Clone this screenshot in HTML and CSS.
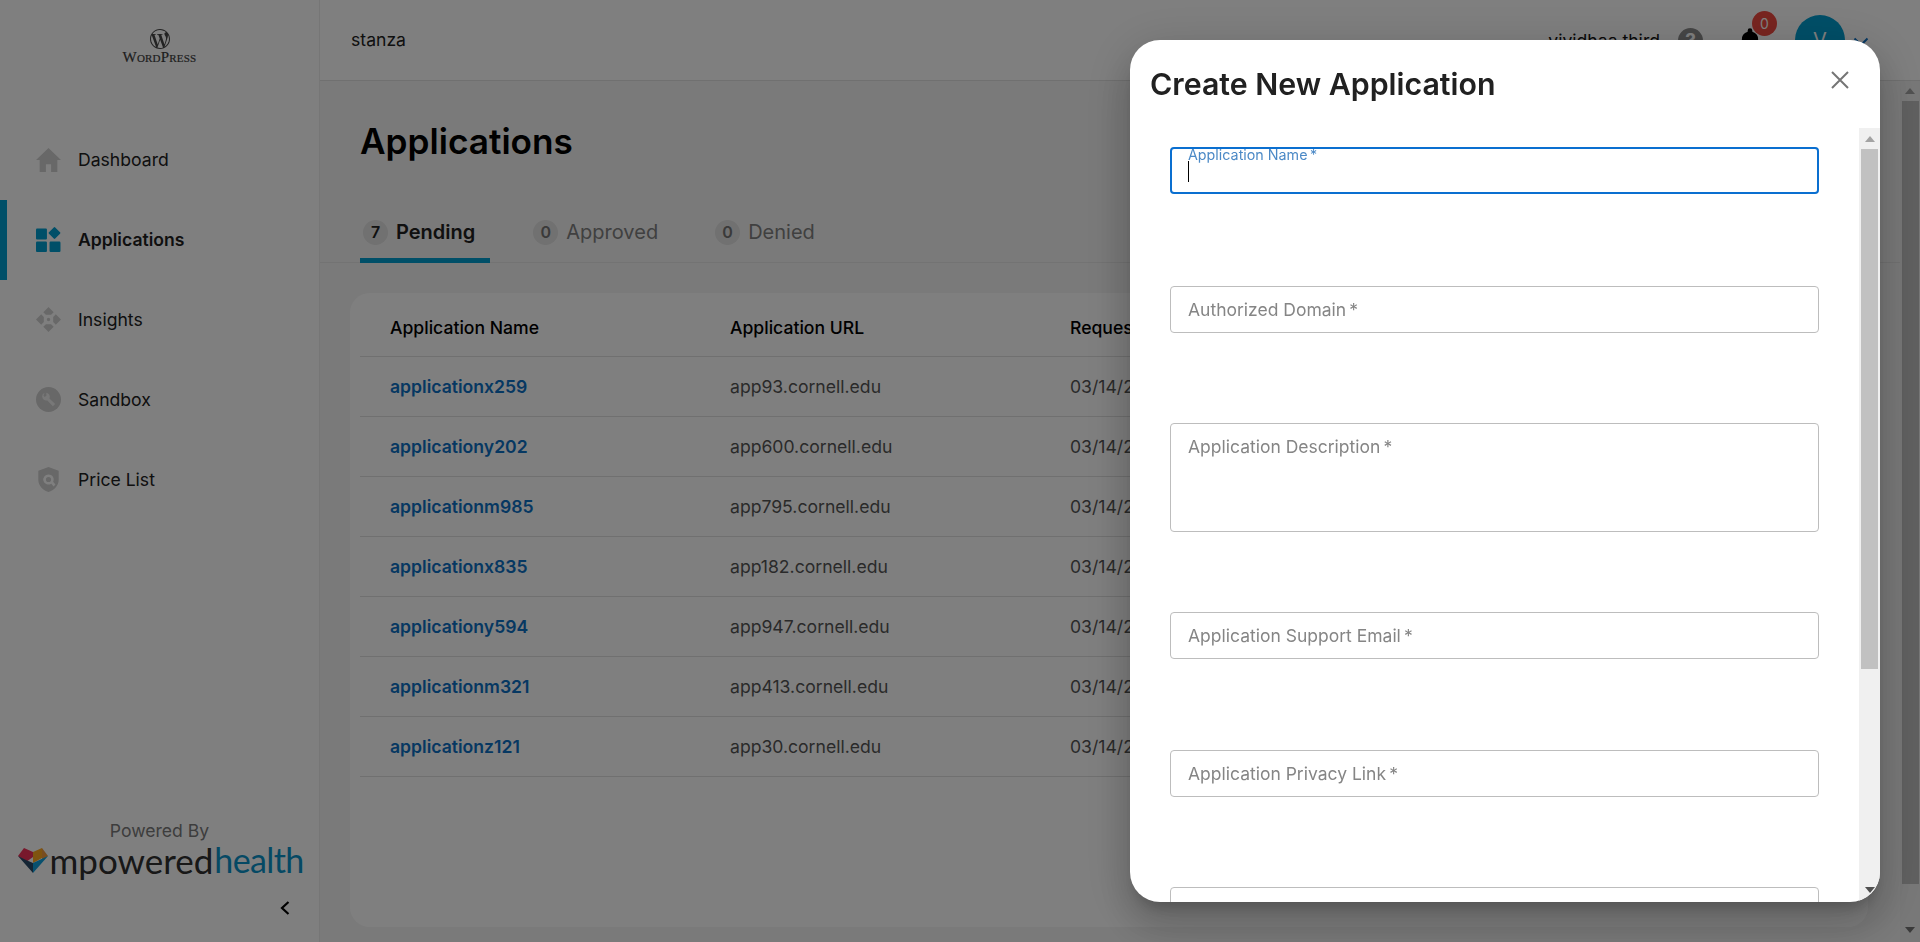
FILE: index.html
```html
<!DOCTYPE html>
<html lang="en">
<head>
<meta charset="utf-8">
<title>Applications</title>
<link rel="stylesheet" href="styles.css">
</head>
<body>
<div class="app">
  <aside class="sidebar">
    <div class="brand">
      <svg class="wp-mark" viewBox="0 0 24 24" width="20" height="20"><path fill="#464646" d="M21.469 6.825c.84 1.537 1.318 3.3 1.318 5.175 0 3.979-2.156 7.456-5.363 9.325l3.295-9.527c.615-1.54.82-2.771.82-3.864 0-.405-.026-.78-.07-1.11m-7.981.105c.647-.03 1.232-.105 1.232-.105.582-.075.514-.93-.067-.899 0 0-1.755.135-2.88.135-1.064 0-2.85-.15-2.85-.15-.585-.03-.661.855-.075.885 0 0 .54.061 1.125.09l1.68 4.605-2.37 7.08L5.354 6.9c.649-.03 1.234-.1 1.234-.1.585-.075.516-.93-.065-.896 0 0-1.746.138-2.874.138-.2 0-.438-.008-.69-.015C4.911 3.15 8.235 1.215 12 1.215c2.809 0 5.365 1.072 7.286 2.833-.046-.003-.091-.009-.141-.009-1.06 0-1.812.923-1.812 1.914 0 .89.513 1.643 1.06 2.531.411.72.89 1.643.89 2.977 0 .915-.354 1.994-.821 3.479l-1.075 3.585-3.9-11.61.001.014zM12 22.784c-1.059 0-2.081-.153-3.048-.437l3.237-9.406 3.315 9.087c.024.053.05.101.078.149-1.12.393-2.325.609-3.582.609M1.211 12c0-1.564.336-3.05.935-4.39L7.29 21.709C3.694 19.96 1.212 16.271 1.211 12M12 0C5.385 0 0 5.385 0 12s5.385 12 12 12 12-5.385 12-12S18.615 0 12 0"/></svg>
      <div class="wp-word">WordPress</div>
    </div>
    <nav class="nav">
      <a class="nav-item"><svg class="nav-icon" viewBox="0 0 24 24"><path d="M12 1 0 12.500h3.500V24h6v-7.500h5V24h6V12.500H24z"/></svg><span>Dashboard</span></a>
      <a class="nav-item active"><svg class="nav-icon" viewBox="0 0 24 24"><rect x="0" y="1.500" width="10.500" height="10.500" rx="1"/><rect x="13.500" y="1.500" width="8.500" height="8.500" rx="1" transform="rotate(45 17.750 5.750)"/><rect x="0" y="14" width="10.500" height="10" rx="1"/><rect x="13" y="14" width="10.500" height="10" rx="1"/></svg><span>Applications</span></a>
      <a class="nav-item"><svg class="nav-icon" viewBox="0 0 24 24"><path d="M12 0l5 5-2.500 2.500h-5L7 5zM12 24l-5-5 2.500-2.500h5L17 19zM0 12l5-5 2.500 2.500v5L5 17zM24 12l-5 5-2.500-2.500v-5L19 7z"/><circle cx="12" cy="12" r="1.600"/></svg><span>Insights</span></a>
      <a class="nav-item"><svg class="nav-icon" viewBox="0 0 24 24"><circle cx="12" cy="12" r="12"/><path d="M8.200 5.500a4 4 0 0 0-2.300 3.700 4 4 0 0 0 5 3.700l5.300 5.500 2.200-2.100-5.500-5.200a4 4 0 0 0-3-5.600L10 8.500l-1.800 1.200-1-1.600z" fill="#fff" fill-opacity=".7"/></svg><span>Sandbox</span></a>
      <a class="nav-item"><svg class="nav-icon" viewBox="0 0 24 27"><path fill-rule="evenodd" d="M12 0 23 4v10c0 6-5 11-11 13C6 25 1 20 1 14V4zM12 8a5.500 5.500 0 1 0 3 10l2.500 3 2-2-2.500-3A5.500 5.500 0 0 0 12 8zm0 2.700a2.800 2.800 0 1 1 0 5.600 2.800 2.800 0 0 1 0-5.600z"/></svg><span>Price List</span></a>
    </nav>
    <div class="powered">
      <div class="powered-label">Powered By</div>
      <div class="mp-logo">
        <svg class="mp-mark" viewBox="0 0 30 25" width="30" height="25"><path d="M0 8 6 0l9 4v5l-7 5z" fill="#f03058"/><path d="M15 4l9-4v10l-9 5z" fill="#ffa820"/><path d="M24 0l6 8-6 4z" fill="#f09a40"/><path d="M0 8l8 4 7 3v10z" fill="#284a68"/><path d="M30 8l-15 7v10z" fill="#10a0dc"/></svg>
        <span class="mp-dark">mpowered</span><span class="mp-blue">health</span>
      </div>
      <div class="collapse"><svg viewBox="0 0 12 16" width="12" height="16"><path d="M9.500 2 3 8l6.500 6" fill="none" stroke="#000" stroke-width="2.200"/></svg></div>
    </div>
  </aside>
  <div class="main">
    <header class="topbar">
      <div class="org">stanza</div>
      <div class="user">
        <span class="user-name">vividhaa third</span>
        <span class="help">?</span>
        <span class="bell-wrap">
          <svg class="bell" viewBox="0 0 24 24" width="28" height="28"><path d="M12 2a2 2 0 0 0-2 2v1a7 7 0 0 0-5 7v5l-2 2v1h18v-1l-2-2v-5a7 7 0 0 0-5-7V4a2 2 0 0 0-2-2zM10 22a2 2 0 0 0 4 0z"/></svg>
          <span class="badge">0</span>
        </span>
        <span class="avatar">V</span>
        <svg class="chev" viewBox="0 0 16 10" width="16" height="10"><path d="M1.500 1.500 8 8l6.500-6.500" fill="none" stroke="#0d70c4" stroke-width="2"/></svg>
      </div>
    </header>
    <div class="body-row">
      <main class="content">
        <h1 class="title">Applications</h1>
        <div class="tabs">
          <div class="tab on"><span class="count">7</span>Pending</div>
          <div class="tab"><span class="count">0</span>Approved</div>
          <div class="tab"><span class="count">0</span>Denied</div>
        </div>
        <section class="card">
          <table class="table">
            <thead><tr><th>Application Name</th><th>Application URL</th><th>Requested Date</th></tr></thead>
            <tbody>
              <tr><td class="link">applicationx259</td><td>app93.cornell.edu</td><td>03/14/2023</td></tr>
              <tr><td class="link">applicationy202</td><td>app600.cornell.edu</td><td>03/14/2023</td></tr>
              <tr><td class="link">applicationm985</td><td>app795.cornell.edu</td><td>03/14/2023</td></tr>
              <tr><td class="link">applicationx835</td><td>app182.cornell.edu</td><td>03/14/2023</td></tr>
              <tr><td class="link">applicationy594</td><td>app947.cornell.edu</td><td>03/14/2023</td></tr>
              <tr><td class="link">applicationm321</td><td>app413.cornell.edu</td><td>03/14/2023</td></tr>
              <tr><td class="link">applicationz121</td><td>app30.cornell.edu</td><td>03/14/2023</td></tr>
            </tbody>
          </table>
        </section>
      </main>
      <div class="page-scroll"><span class="arrow up"></span><span class="page-thumb"></span><span class="arrow down"></span></div>
    </div>
  </div>
</div>
<div class="overlay"></div>
<div class="modal">
  <div class="modal-head">
    <h2 class="modal-title">Create New Application</h2>
    <svg class="close" viewBox="0 0 18 18" width="18" height="18"><path d="M1 1l16 16M17 1 1 17" stroke="#757575" stroke-width="2" fill="none"/></svg>
  </div>
  <div class="modal-body">
    <form class="form">
      <div class="field focus"><label>Application Name&thinsp;*</label><span class="caret"></span></div>
      <div class="field"><label>Authorized Domain&thinsp;*</label></div>
      <div class="field area"><label>Application Description&thinsp;*</label></div>
      <div class="field email"><label>Application Support Email&thinsp;*</label></div>
      <div class="field"><label>Application Privacy Link&thinsp;*</label></div>
      <div class="field"></div>
    </form>
    <div class="modal-scroll"><span class="arrow up"></span><span class="modal-thumb"></span><span class="arrow down"></span></div>
  </div>
</div>
</body>
</html>
```
FILE: styles.css
```css
* { box-sizing: border-box; }
html, body { margin: 0; height: 942px; overflow: hidden; }
body { font-family: Inter, "Liberation Sans", sans-serif; color: #212121; background: #fff; }
.app { display: flex; height: 942px; }

.sidebar { width: 320px; flex: none; background: #fff; border-right: 1px solid #ececec; display: flex; flex-direction: column; }
.brand { height: 80px; padding-top: 29px; display: flex; flex-direction: column; align-items: center; }
.wp-mark { display: block; }
.wp-word { font-family: "Liberation Serif", serif; font-variant: small-caps; font-size: 15px; line-height: 13px; color: #3c3c3c; margin-top: 2px; letter-spacing: .2px; -webkit-text-stroke: .2px #3c3c3c; }
.nav { margin-top: 40px; display: flex; flex-direction: column; }
.nav-item { height: 80px; display: flex; align-items: center; padding: 0 0 2px 36px; gap: 17px; font-size: 17.600px; color: #212121; }
.nav-item.active { font-weight: 600; color: #1f1f1f; box-shadow: inset 7px 0 0 #009ed0; }
.nav-icon { width: 25px; height: 25px; fill: #d0d0d0; flex: none; }
.active .nav-icon { fill: #009ed0; }
.powered { margin-top: auto; display: flex; flex-direction: column; align-items: center; padding-bottom: 26px; }
.powered-label { font-size: 17.600px; line-height: 21px; color: #7a7a7a; }
.mp-logo { display: flex; align-items: center; height: 30px; line-height: 30px; width: 284px; margin-top: 4px; font-family: Lato, sans-serif; font-size: 35px; white-space: nowrap; }
.mp-mark { flex: none; margin-right: 2px; }
.mp-dark { color: #303030; }
.mp-blue { color: #0a92c8; font-size: 34px; letter-spacing: -.6px; margin-left: 1px; }
.collapse { align-self: flex-end; padding-right: 28px; margin-top: 25px; height: 16px; }

.main { flex: 1; min-width: 0; display: flex; flex-direction: column; background: #f5f5f5; }
.topbar { height: 81px; flex: none; background: #fff; border-bottom: 1px solid #e0e0e0; display: flex; align-items: center; justify-content: space-between; padding: 0 51px 0 31px; }
.org { font-size: 17.600px; color: #212121; margin-bottom: 2px; }
.user { display: flex; align-items: center; }
.user-name { font-size: 17.600px; color: #111; }
.help { width: 25px; height: 25px; margin-left: 18px; border-radius: 50%; background: #8c8c8c; color: #fff; font-weight: 700; font-size: 19px; display: flex; align-items: center; justify-content: center; }
.bell-wrap { position: relative; width: 28px; height: 28px; margin-left: 33px; }
.badge { position: absolute; left: 16px; top: -15px; width: 25px; height: 25px; border-radius: 50%; background: #f04a40; color: #fff; font-size: 14px; display: flex; align-items: center; justify-content: center; }
.avatar { width: 50px; height: 50px; margin-left: 31px; border-radius: 50%; background: #009ed0; color: #fff; font-size: 20px; display: flex; align-items: center; justify-content: center; }
.chev { margin-left: 8px; margin-top: 4px; }

.body-row { flex: 1; display: flex; min-height: 0; }
.content { flex: 1; min-width: 0; padding-left: 40px; display: flex; flex-direction: column; }
.title { margin: 0; height: 125px; padding-top: 39px; font-size: 35.200px; line-height: 42px; font-weight: 600; color: #000; }
.tabs { display: flex; flex: none; height: 57px; margin-left: -40px; padding-left: 40px; border-bottom: 1px solid #e6e6e6; gap: 29px; }
.tab { display: flex; align-items: center; gap: 8px; height: 57px; font-size: 20px; color: #808080; padding: 0 14px 5px; }
.tab.on { color: #212121; font-weight: 600; border-bottom: 5px solid #009ed0; padding: 0 15px 0 3px; }
.count { width: 25px; height: 25px; border-radius: 50%; background: #e2e2e2; font-size: 16px; font-weight: 600; color: #757575; display: flex; align-items: center; justify-content: center; }
.on .count { color: #212121; }
.card { margin: 30px 32px 0 -10px; height: 634px; background: #fff; border-radius: 20px; padding: 0 10px; }
.table { width: 100%; border-collapse: collapse; table-layout: fixed; }
.table th { height: 63px; text-align: left; font-size: 17.600px; font-weight: 500; color: #000; padding: 7px 0 0 30px; border-bottom: 1px solid #e0e0e0; }
.table td { height: 60px; font-size: 17.600px; color: #555; padding: 0 0 0 30px; border-bottom: 1px solid #e0e0e0; }
.table th:nth-child(1), .table th:nth-child(2) { width: 340px; }
.table td.link { color: #0d70c4; font-weight: 600; }

.page-scroll { width: 20px; flex: none; background: #f1f1f1; display: flex; flex-direction: column; align-items: center; padding: 7px 1px 9px; }
.page-thumb { width: 17px; height: 783px; background: #c1c1c1; margin-top: 7px; flex: none; }
.arrow { width: 0; height: 0; border-left: 5px solid transparent; border-right: 5px solid transparent; flex: none; }
.arrow.up { border-bottom: 6px solid #a3a3a3; }
.arrow.down { border-top: 6px solid #757575; margin-top: auto; }

.overlay { position: fixed; inset: 0; background: rgba(0,0,0,.5); }
.modal { position: fixed; left: 1130px; top: 40px; width: 750px; height: 862px; background: #fff; border-radius: 30px; overflow: hidden; display: flex; flex-direction: column; box-shadow: 0 11px 15px -7px rgba(0,0,0,.2), 0 24px 38px 3px rgba(0,0,0,.14), 0 9px 46px 8px rgba(0,0,0,.12); }
.modal-head { height: 88px; flex: none; display: flex; justify-content: space-between; padding: 26px 31px 0 20px; }
.modal-title { margin: 0; font-size: 30.300px; line-height: 36px; font-weight: 600; color: #212121; }
.close { margin-top: 5px; }
.modal-body { flex: 1; display: flex; min-height: 0; }
.form { flex: 1; padding: 19px 40px 0; min-width: 0; display: flex; flex-direction: column; gap: 90px; overflow: hidden; }
.field { flex: none; position: relative; height: 47px; border: 1px solid #bdbdbd; border-radius: 4px; padding: 0 17px; display: flex; align-items: center; font-size: 17.500px; line-height: 22px; color: #858585; }
.field.area { height: 109px; align-items: flex-start; padding-top: 12px; margin-bottom: -10px; }
.field.email { margin-bottom: 1px; }
.field.focus { border: 2px solid #0a6fd0; margin-bottom: 2px; }
.field.focus label { position: absolute; left: 16px; top: -3px; font-size: 14.300px; line-height: 17px; color: #1f6cb8; opacity: .8; }
.caret { position: absolute; left: 16px; top: 12px; width: 1px; height: 21px; background: #000; }
.modal-scroll { width: 21px; flex: none; background: #f0f0f0; display: flex; flex-direction: column; align-items: center; padding: 8px 2px 9px; }
.modal-scroll .arrow.down { border-top-color: #505050; }
.modal-thumb { width: 17px; height: 520px; background: #c1c1c1; margin-top: 7px; flex: none; }
```
